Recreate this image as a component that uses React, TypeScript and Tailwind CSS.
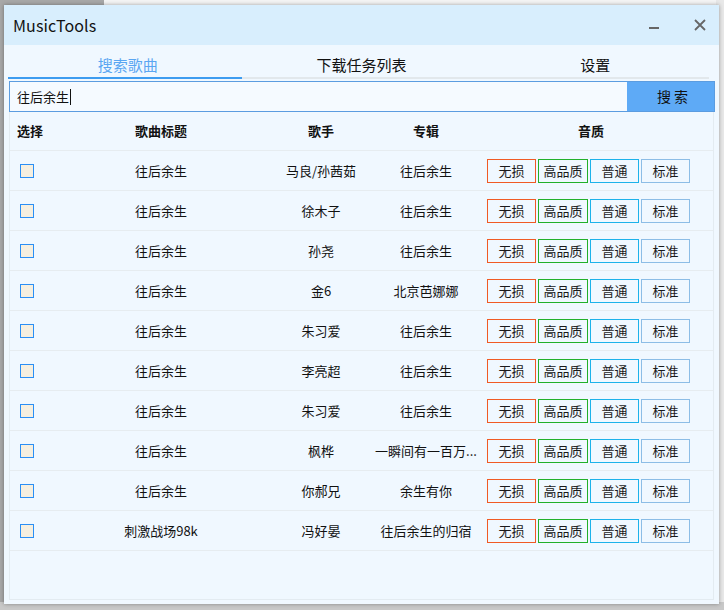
import React from "react";

const FONT = { fontFamily: '"Noto Sans CJK SC", "Noto Sans", sans-serif' };

type Row = { title: string; artist: string; album: string };

const rows: Row[] = [
  { title: "往后余生", artist: "马良/孙茜茹", album: "往后余生" },
  { title: "往后余生", artist: "徐木子", album: "往后余生" },
  { title: "往后余生", artist: "孙尧", album: "往后余生" },
  { title: "往后余生", artist: "金6", album: "北京芭娜娜" },
  { title: "往后余生", artist: "朱习爱", album: "往后余生" },
  { title: "往后余生", artist: "李亮超", album: "往后余生" },
  { title: "往后余生", artist: "朱习爱", album: "往后余生" },
  { title: "往后余生", artist: "枫桦", album: "一瞬间有一百万..." },
  { title: "往后余生", artist: "你郝兄", album: "余生有你" },
  { title: "刺激战场98k", artist: "冯好晏", album: "往后余生的归宿" },
];

function QualityButtons() {
  return (
    <div className="flex items-center gap-[2px]">
      <div className="w-[49px] h-[24px] border border-[#f05a24] flex items-center justify-center text-[13px] text-[#1a1a1a]">无损</div>
      <div className="w-[50px] h-[24px] border border-[#22b02a] flex items-center justify-center text-[13px] text-[#1a1a1a]">高品质</div>
      <div className="w-[49px] h-[24px] border border-[#1cb2ea] flex items-center justify-center text-[13px] text-[#1a1a1a]">普通</div>
      <div className="w-[49px] h-[24px] border border-[#8cbde6] flex items-center justify-center text-[13px] text-[#1a1a1a]">标准</div>
    </div>
  );
}

export default function App() {
  return (
    <div className="relative w-[724px] h-[610px] overflow-hidden bg-[#a8a8a8]" style={FONT}>
      {/* desktop background pieces */}
      <div className="absolute left-[104px] top-0 right-0 h-[8px] bg-[#f4f4f4] border-b border-[#d0d0d0]" />
      <div className="absolute right-0 top-0 w-[8px] h-[610px] bg-[#e8e8e8]" />
      <div className="absolute left-0 bottom-0 w-[724px] h-[8px] bg-[#c8c8c8]" />

      {/* window */}
      <div className="absolute left-[4px] top-[5px] w-[715px] h-[599px] bg-[#f0f8ff] flex flex-col shadow-[0_0_4px_rgba(0,0,0,0.35)]">
        {/* title bar */}
        <div className="h-[40px] bg-[#d8eefd] flex items-center pl-[9px] pr-[13px]">
          <div className="text-[16px] text-[#111] tracking-[0.1px]">MusicTools</div>
          <div className="flex-1" />
          <div className="w-[10px] h-[2px] bg-[#666] mr-[35px] mt-[6px]" />
          <svg width="12" height="12" viewBox="0 0 12 12">
            <path d="M1 1 L11 11 M11 1 L1 11" stroke="#666" strokeWidth="1.8" />
          </svg>
        </div>

        {/* tabs */}
        <div className="ml-[4px] w-[701px] h-[34px] flex">
          <div className="flex-1 flex flex-col">
            <div className="flex-1 flex items-center justify-center text-[15px] text-[#5aa6f2] pt-[8px] pl-[6px]">搜索歌曲</div>
            <div className="h-[2px] bg-[#3d9cf0]" />
          </div>
          <div className="flex-1 flex flex-col">
            <div className="flex-1 flex items-center justify-center text-[15px] text-[#111] pt-[8px] pl-[6px]">下载任务列表</div>
            <div className="h-[2px] bg-[#e2e8ec]" />
          </div>
          <div className="flex-1 flex flex-col">
            <div className="flex-1 flex items-center justify-center text-[15px] text-[#111] pt-[8px] pl-[6px]">设置</div>
            <div className="h-[2px] bg-[#e2e8ec]" />
          </div>
        </div>

        {/* search box */}
        <div className="ml-[5px] mt-[2px] w-[706px] h-[31px] border border-[#5b9ce0] flex bg-[#f5faff]">
          <div className="flex-1 flex items-center pl-[7px] text-[13px] text-[#111]">
            往后余生<span className="inline-block w-[1px] h-[16px] bg-[#111] ml-[1px]" />
          </div>
          <div className="w-[87px] bg-[#5eaaf6] flex items-center justify-center pl-[4px] text-[14px] text-[#111]">搜 索</div>
        </div>

        {/* table panel */}
        <div className="ml-[5px] w-[705px] flex-1 border-x border-b border-[#e3ebf1] mb-[4px] flex flex-col">
          <div className="h-[39px] flex items-center text-[13px] font-bold text-[#111] border-b border-[#e6ecf0]">
            <div className="w-[91px] pl-[7px]">选择</div>
            <div className="w-[120px] text-center">歌曲标题</div>
            <div className="w-[100px] ml-[50px] text-center">歌手</div>
            <div className="w-[110px] text-center">专辑</div>
            <div className="w-[220px] text-center">音质</div>
          </div>
          {rows.map((r, i) => (
            <div key={i} className="h-[40px] flex items-center text-[13px] text-[#111] border-b border-[#e6ecf0]">
              <div className="w-[91px] pl-[10px] flex items-center">
                <div className="w-[14px] h-[14px] mt-[1px] border-[1.5px] border-[#2a8ff5] bg-[#f5efe0]" />
              </div>
              <div className="w-[120px] text-center">{r.title}</div>
              <div className="w-[100px] ml-[50px] text-center">{r.artist}</div>
              <div className="w-[110px] text-center whitespace-nowrap">{r.album}</div>
              <div className="w-[220px] flex justify-start pl-[6px]">
                <QualityButtons />
              </div>
            </div>
          ))}
        </div>
      </div>
    </div>
  );
}
